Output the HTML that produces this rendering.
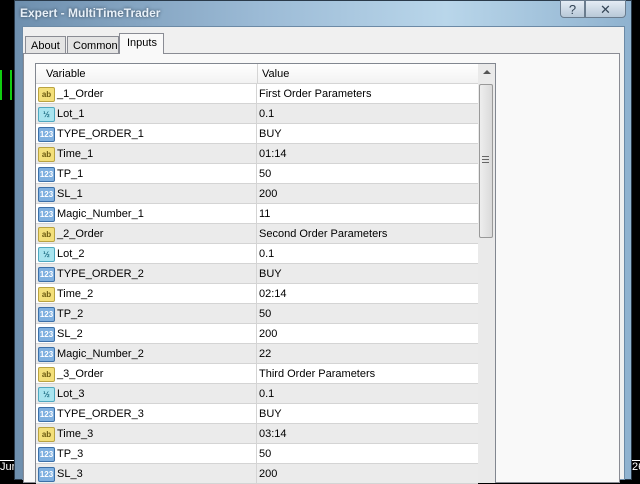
<!DOCTYPE html><html><head><style>
body{margin:0;width:640px;height:480px;overflow:hidden;background:#000;font-family:"Liberation Sans",sans-serif;font-size:11px;position:relative}
div{position:absolute;box-sizing:border-box}
.r{left:36px;width:442px;height:20px;border-bottom:1px solid #d4d4d4}
.r span{position:absolute;top:4px}
.ic{position:absolute;left:2px;top:3px;width:15px;height:13px;border-radius:2px;font-size:8px;font-weight:bold;text-align:center;line-height:13px;font-style:normal}
.ab{background:#f3df7a;border:1px solid #b9a341;color:#6b5a10}
.hf{background:#a8e4ef;border:1px solid #4fa8c0;color:#1a6a80}
.n{background:#7fb0e0;border:1px solid #3c70a8;color:#fff}
</style></head><body>
<div style="left:0;top:70px;width:12px;height:30px;border-left:2px solid #1c1;border-right:2px solid #1c1"></div>
<div style="left:14px;top:0;width:618px;height:480px;background:linear-gradient(90deg,#6e8fae,#9cbbd6 40%,#b9d6ea 70%,#8fb2cf);border:1px solid #2a3a4a"></div>
<div style="left:20px;top:6px;color:#e8f0f8;font-weight:bold;font-size:12px;text-shadow:0 0 3px #345">Expert - MultiTimeTrader</div>
<div style="left:560px;top:0;width:25px;height:18px;background:linear-gradient(#e4ecf4,#b8c8d8);border:1px solid #6a7c8e;border-radius:0 0 0 4px;text-align:center;font-size:13px;line-height:17px;color:#345">?</div>
<div style="left:585px;top:0;width:41px;height:18px;background:linear-gradient(#e4ecf4,#b8c8d8);border:1px solid #6a7c8e;border-radius:0 0 4px 0;text-align:center;font-size:13px;line-height:17px;color:#345">✕</div>
<div style="left:22px;top:26px;width:603px;height:454px;background:#f0f0f0;border:1px solid #6c8aa6"></div>
<div style="left:23px;top:53px;width:597px;height:430px;background:#f9f9f9;border:1px solid #8a8c94"></div>
<div style="left:25px;top:36px;width:41px;height:18px;background:#e4e4e4;border:1px solid #8a8c94;padding:3px 0 0 5px">About</div>
<div style="left:67px;top:36px;width:52px;height:18px;background:#e4e4e4;border:1px solid #8a8c94;padding:3px 0 0 5px">Common</div>
<div style="left:119px;top:33px;width:45px;height:21px;background:#f9f9f9;border:1px solid #8a8c94;border-bottom:none;padding:3px 0 0 7px">Inputs</div>
<div style="left:35px;top:63px;width:461px;height:420px;background:#fff;border:1px solid #828790"></div>
<div style="left:36px;top:64px;width:442px;height:20px;background:linear-gradient(#fff,#f2f2f2);border-bottom:1px solid #d5d5d5"><span style="position:absolute;left:10px;top:4px">Variable</span><span style="position:absolute;left:221px;top:0;height:20px;border-left:1px solid #d5d5d5"></span><span style="position:absolute;left:226px;top:4px">Value</span></div>
<div style="left:478px;top:64px;width:17px;height:419px;background:#eaeaea"></div>
<div style="left:483px;top:70px;width:0;height:0;border:4px solid transparent;border-bottom:4px solid #555;border-top:none"></div>
<div style="left:479px;top:84px;width:14px;height:154px;background:linear-gradient(90deg,#eee,#dadada);border:1px solid #999;border-radius:2px"></div>
<div style="left:482px;top:156px;width:7px;height:7px;border-top:1px solid #666;border-bottom:1px solid #666"></div><div style="left:482px;top:159px;width:7px;height:1px;background:#666"></div>
<div class="r" style="top:84px;background:#fff"><i class="ic ab">ab</i><span style="left:21px">_1_Order</span><span style="left:223px">First Order Parameters</span></div>
<div class="r" style="top:104px;background:#ebebeb"><i class="ic hf">½</i><span style="left:21px">Lot_1</span><span style="left:223px">0.1</span></div>
<div class="r" style="top:124px;background:#fff"><i class="ic n">123</i><span style="left:21px">TYPE_ORDER_1</span><span style="left:223px">BUY</span></div>
<div class="r" style="top:144px;background:#ebebeb"><i class="ic ab">ab</i><span style="left:21px">Time_1</span><span style="left:223px">01:14</span></div>
<div class="r" style="top:164px;background:#fff"><i class="ic n">123</i><span style="left:21px">TP_1</span><span style="left:223px">50</span></div>
<div class="r" style="top:184px;background:#ebebeb"><i class="ic n">123</i><span style="left:21px">SL_1</span><span style="left:223px">200</span></div>
<div class="r" style="top:204px;background:#fff"><i class="ic n">123</i><span style="left:21px">Magic_Number_1</span><span style="left:223px">11</span></div>
<div class="r" style="top:224px;background:#ebebeb"><i class="ic ab">ab</i><span style="left:21px">_2_Order</span><span style="left:223px">Second Order Parameters</span></div>
<div class="r" style="top:244px;background:#fff"><i class="ic hf">½</i><span style="left:21px">Lot_2</span><span style="left:223px">0.1</span></div>
<div class="r" style="top:264px;background:#ebebeb"><i class="ic n">123</i><span style="left:21px">TYPE_ORDER_2</span><span style="left:223px">BUY</span></div>
<div class="r" style="top:284px;background:#fff"><i class="ic ab">ab</i><span style="left:21px">Time_2</span><span style="left:223px">02:14</span></div>
<div class="r" style="top:304px;background:#ebebeb"><i class="ic n">123</i><span style="left:21px">TP_2</span><span style="left:223px">50</span></div>
<div class="r" style="top:324px;background:#fff"><i class="ic n">123</i><span style="left:21px">SL_2</span><span style="left:223px">200</span></div>
<div class="r" style="top:344px;background:#ebebeb"><i class="ic n">123</i><span style="left:21px">Magic_Number_2</span><span style="left:223px">22</span></div>
<div class="r" style="top:364px;background:#fff"><i class="ic ab">ab</i><span style="left:21px">_3_Order</span><span style="left:223px">Third Order Parameters</span></div>
<div class="r" style="top:384px;background:#ebebeb"><i class="ic hf">½</i><span style="left:21px">Lot_3</span><span style="left:223px">0.1</span></div>
<div class="r" style="top:404px;background:#fff"><i class="ic n">123</i><span style="left:21px">TYPE_ORDER_3</span><span style="left:223px">BUY</span></div>
<div class="r" style="top:424px;background:#ebebeb"><i class="ic ab">ab</i><span style="left:21px">Time_3</span><span style="left:223px">03:14</span></div>
<div class="r" style="top:444px;background:#fff"><i class="ic n">123</i><span style="left:21px">TP_3</span><span style="left:223px">50</span></div>
<div class="r" style="top:464px;background:#ebebeb"><i class="ic n">123</i><span style="left:21px">SL_3</span><span style="left:223px">200</span></div>
<div style="left:256px;top:84px;width:1px;height:400px;background:#d4d4d4"></div>
<div style="left:0;top:460px;width:14px;height:14px;color:#fff;font-size:11px;overflow:hidden;border-top:1px solid #fff">Jur</div>
<div style="left:632px;top:460px;width:8px;height:14px;color:#fff;font-size:11px;overflow:hidden;border-top:1px solid #fff">26</div>
</body></html>
